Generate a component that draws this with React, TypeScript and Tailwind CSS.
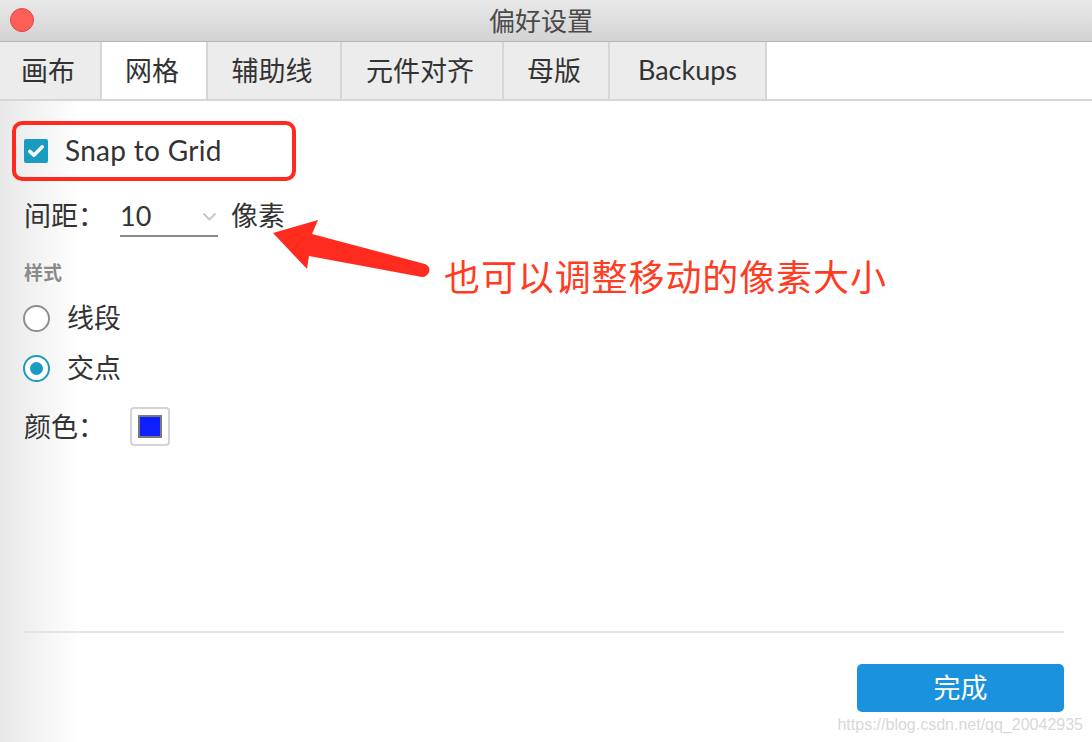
import React from 'react';

const cjk = "font-['Noto_Sans_CJK_SC',sans-serif]";
const latin = "font-['Lato','Noto_Sans_CJK_SC',sans-serif]";

const tabs = [
  { name: '画布', w: 'w-[102px]' },
  { name: '网格', w: 'w-[106px]', active: true },
  { name: '辅助线', w: 'w-[134px]' },
  { name: '元件对齐', w: 'w-[162px]' },
  { name: '母版', w: 'w-[106px]' },
  { name: 'Backups', w: 'w-[157px]', latin: true },
];

const App = () => {
  return (
    <div className={`relative w-[1092px] h-[742px] flex flex-col bg-white overflow-hidden ${cjk} text-[#333]`}>
      {/* Title bar */}
      <div className="relative h-[42px] shrink-0 flex items-center justify-center bg-[linear-gradient(180deg,#e9e9e9,#d3d3d3)] border-b border-[#b4b4b4]">
        <span className="absolute left-[10px] top-[8px] w-[24px] h-[24px] rounded-full bg-[#fc5f57] border border-[#e2463f]" />
        <span className="mr-[10px] mb-[2px] text-[26px] leading-none text-[#4a4a4a]">偏好设置</span>
      </div>

      {/* Tabs */}
      <div className="h-[59px] shrink-0 flex border-b-2 border-[#d6d6d6]">
        {tabs.map(tab => (
          <div
            key={tab.name}
            className={`${tab.w} h-full flex items-center justify-center border-r-2 border-[#d6d6d6] ${tab.active ? 'bg-white' : 'bg-[#ececec]'}`}
          >
            <span className={`${tab.latin ? latin + ' text-[27px]' : 'text-[27px] mr-[4px]'} leading-none mb-[2px] text-[#333]`}>{tab.name}</span>
          </div>
        ))}
      </div>

      {/* Content */}
      <div className="flex-1 flex flex-col pl-6 pr-7 bg-[linear-gradient(90deg,#e8e8e8,#ffffff_80px)]">
        <div className="mt-5 -ml-3 w-[284px] h-[60px] border-4 border-[#ff2a1f] rounded-[10px] flex items-center pl-2">
          <span className="w-[24px] h-[24px] bg-[#1a9bc0] rounded-[2px] flex items-center justify-center">
            <svg width="20" height="20" viewBox="0 0 24 24" fill="none">
              <path d="M4.5 12.5l5 4.5L19.5 7" stroke="white" strokeWidth="4.2" strokeLinecap="round" strokeLinejoin="round" />
            </svg>
          </span>
          <span className={`${latin} ml-[17px] mb-[3px] text-[28px] tracking-[0.3px] leading-none text-[#333]`}>Snap to Grid</span>
        </div>

        <div className="mt-[16px] h-[40px] flex items-center">
          <span className="w-[96px] mb-[6px] text-[27px] leading-none">间距：</span>
          <div className="w-[98px] h-[40px] flex items-center justify-between border-b-2 border-[#8a8a8a] pr-[1px]">
            <span className={`${latin} text-[27px] leading-none mb-[1px]`}>10</span>
            <svg width="15" height="9" viewBox="0 0 15 9" fill="none" className="mt-[1px]">
              <path d="M1.5 1.5l6 6 6-6" stroke="#c9c9c9" strokeWidth="2" />
            </svg>
          </div>
          <span className="ml-[13px] mb-[6px] text-[27px] leading-none">像素</span>
        </div>

        <div className="mt-[22px] h-[24px] flex items-center text-[19px] leading-none font-semibold text-[#8a8a8a]">样式</div>

        <div className="mt-[21px] h-[28px] flex items-center">
          <span className="-ml-[1px] w-[27px] h-[27px] rounded-full border-2 border-[#8e8e8e] bg-white" />
          <span className="ml-[17px] mb-[3px] text-[27px] leading-none">线段</span>
        </div>

        <div className="mt-[22px] h-[28px] flex items-center">
          <span className="-ml-[1px] w-[27px] h-[27px] rounded-full border-[2.5px] border-[#1a9bc0] bg-white flex items-center justify-center">
            <span className="w-[13px] h-[13px] rounded-full bg-[#1a9bc0]" />
          </span>
          <span className="ml-[17px] mb-[3px] text-[27px] leading-none">交点</span>
        </div>

        <div className="mt-[25px] h-[39px] flex items-center">
          <span className="w-[106px] mb-[3px] text-[27px] leading-none">颜色：</span>
          <span className="w-[40px] h-[39px] rounded-[4px] border-2 border-[#d4d4d4] bg-white flex items-center justify-center">
            <span className="w-[24px] h-[23px] bg-[#0f1eff] border-2 border-[#7a7a7a]" />
          </span>
        </div>

        <div className="flex-1" />
        <div className="h-[2px] bg-[#e5e5e5]" />
        <div className="mt-[31px] mb-[30px] flex justify-end">
          <button className="w-[207px] h-[48px] rounded-[5px] bg-[#1a92dd] text-white flex items-center justify-center">
            <span className="text-[27px] leading-none mb-[3px]">完成</span>
          </button>
        </div>
      </div>

      {/* Annotation arrow */}
      <svg className="absolute left-0 top-0 pointer-events-none" width="1092" height="742" viewBox="0 0 1092 742">
        <path
          d="M273 233 L318 220 L312 234 L425 264 Q431 267 429 272 Q427 277 422 277 L309 256 L307 269 Z"
          fill="#ff2b1f"
        />
      </svg>
      <span className="absolute left-[444px] top-[257px] text-[36px] leading-none text-[#ff3b22] tracking-[0.9px]">
        也可以调整移动的像素大小
      </span>

      <span className="absolute right-[9px] bottom-[9px] font-['Liberation_Sans',sans-serif] text-[16px] leading-none text-[#d8d8d8]">
        https://blog.csdn.net/qq_20042935
      </span>
    </div>
  );
};

export default App;
